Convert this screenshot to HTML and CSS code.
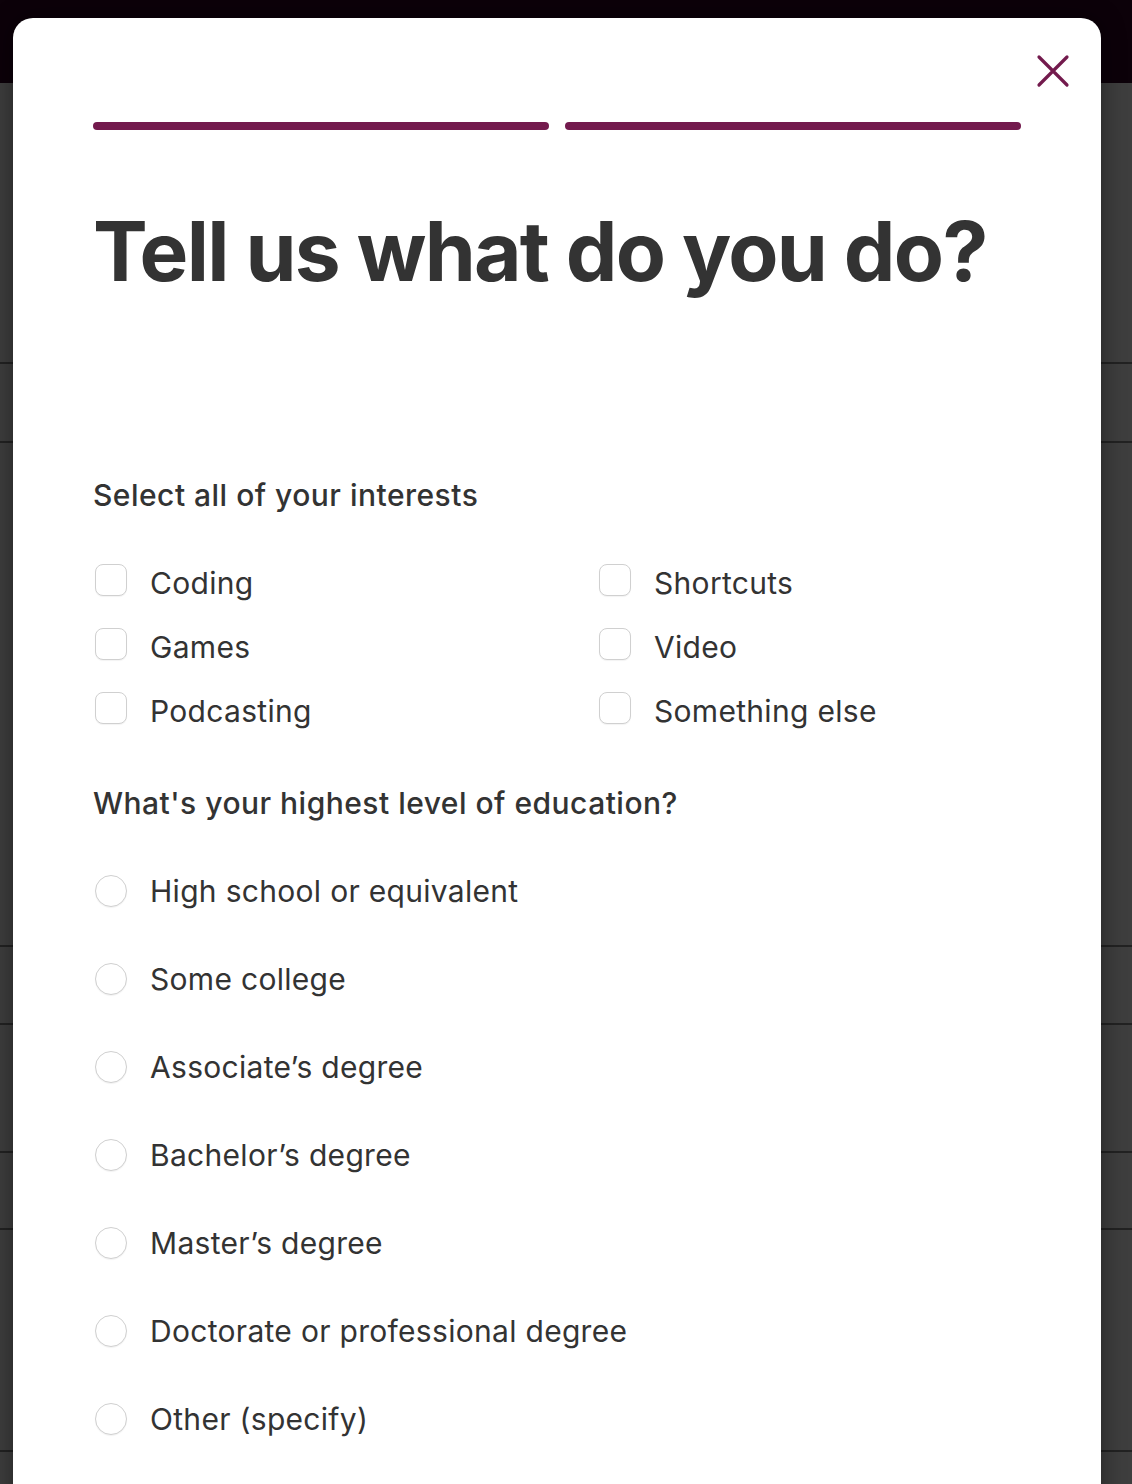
FILE: index.html
```html
<!DOCTYPE html>
<html lang="en">
<head>
    <meta charset="UTF-8">
    <meta name="viewport" content="width=device-width, initial-scale=1.0">
    <title>Tell us what do you do?</title>
    <link rel="stylesheet" href="styles.css">
</head>
<body>
    <div class="backdrop">
        <div class="topbar"></div>
        <div class="row row-1"></div>
        <div class="row row-2"></div>
        <div class="row row-3"></div>
        <div class="row row-4"></div>
        <div class="row row-5"></div>
        <div class="row row-6"></div>
        <div class="row row-7"></div>
        <div class="row row-8"></div>
    </div>

    <div class="modal">
        <button class="close-btn" aria-label="Close">
            <svg width="34" height="34" viewBox="0 0 34 34">
                <path d="M3 3 L31 31 M31 3 L3 31" stroke="#731a4d" stroke-width="3.2" stroke-linecap="round" fill="none"/>
            </svg>
        </button>

        <div class="progress">
            <span class="step done"></span>
            <span class="step done"></span>
        </div>

        <h1 class="title">Tell us what do you do?</h1>

        <h2 class="question">Select all of your interests</h2>
        <div class="check-grid">
            <label class="option"><span class="box"></span>Coding</label>
            <label class="option"><span class="box"></span>Shortcuts</label>
            <label class="option"><span class="box"></span>Games</label>
            <label class="option"><span class="box"></span>Video</label>
            <label class="option"><span class="box"></span>Podcasting</label>
            <label class="option"><span class="box"></span>Something else</label>
        </div>

        <h2 class="question question-edu">What's your highest level of education?</h2>
        <div class="radio-list">
            <label class="option"><span class="circle"></span>High school or equivalent</label>
            <label class="option"><span class="circle"></span>Some college</label>
            <label class="option"><span class="circle"></span>Associate’s degree</label>
            <label class="option"><span class="circle"></span>Bachelor’s degree</label>
            <label class="option"><span class="circle"></span>Master’s degree</label>
            <label class="option"><span class="circle"></span>Doctorate or professional degree</label>
            <label class="option"><span class="circle"></span>Other (specify)</label>
        </div>
    </div>
</body>
</html>
```

FILE: styles.css
```css
:root {
    --brand: #731a4d;
    --text: #333333;
    --line: #d0d0d0;
    --shade: #3e3e3e;
}

body {
    margin: 0;
    height: 1484px;
    overflow: hidden;
    font-family: 'Inter', 'Liberation Sans', sans-serif;
    background: var(--shade);
    color: var(--text);
}

/* page behind the dialog */
.backdrop {
    display: flex;
    flex-direction: column;
}

.topbar {
    height: 83px;
    background: #0c0109;
}

.row {
    border-bottom: 2px solid #222222;
}

.row-1 { height: 279px; }
.row-2 { height: 77px; }
.row-3 { height: 502px; }
.row-4 { height: 76px; }
.row-5 { height: 126px; }
.row-6 { height: 75px; }
.row-7 { height: 220px; }
.row-8 { height: 100px; }

/* dialog */
.modal {
    position: absolute;
    top: 18px;
    left: 13px;
    width: 1088px;
    height: 1600px;
    box-sizing: border-box;
    padding: 104px 80px 0;
    background: #ffffff;
    border-radius: 20px;
    box-shadow: 0 0 24px rgba(0, 0, 0, 0.45);
}

.close-btn {
    position: absolute;
    top: 33px;
    right: 28px;
    width: 40px;
    height: 40px;
    padding: 0;
    border: none;
    background: none;
    display: flex;
    align-items: center;
    justify-content: center;
    cursor: pointer;
}

.progress {
    display: flex;
    gap: 16px;
}

.step {
    flex: 1;
    height: 8px;
    border-radius: 4px;
    background: #eeeeee;
}

.step.done {
    background: var(--brand);
}

.title {
    margin: 77px 0 0;
    font-size: 82px;
    line-height: 90px;
    font-weight: 700;
    letter-spacing: -0.021em;
    color: var(--text);
}

.question {
    margin: 180px 0 0;
    font-size: 30px;
    line-height: 36px;
    font-weight: 500;
    letter-spacing: 0.016em;
}

.question-edu {
    margin-top: 54px;
}

.check-grid {
    margin-top: 50px;
    display: grid;
    grid-template-columns: 504px 1fr;
    row-gap: 24px;
}

.radio-list {
    margin-top: 50px;
    display: flex;
    flex-direction: column;
    gap: 48px;
}

.option {
    height: 40px;
    display: flex;
    align-items: center;
    gap: 23px;
    font-size: 30px;
    letter-spacing: 0.01em;
    color: var(--text);
    cursor: pointer;
}

.box,
.circle {
    flex: none;
    width: 30px;
    height: 30px;
    margin-left: 2px;
    border: 1px solid var(--line);
    background: #ffffff;
    box-shadow: 0 1px 1px rgba(0, 0, 0, 0.05);
}

.box {
    border-radius: 8px;
    margin-bottom: 6px;
}

.circle {
    border-radius: 50%;
}
```
